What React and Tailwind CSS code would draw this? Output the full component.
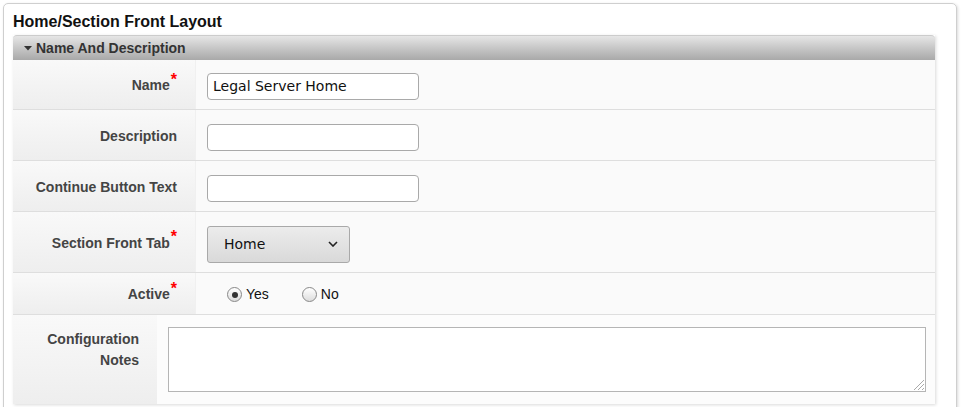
import React from "react";

const Star = () => (
  <span className="text-[#f00] text-[16px] font-bold leading-none relative -top-[6px] ml-[1px]">*</span>
);

function Row({ label, req, h, children, last }) {
  return (
    <div className={`flex ${last ? "" : "border-b border-[#dedede]"}`} style={{ height: h }}>
      <div className="w-[183px] shrink-0 flex items-center justify-end pr-[18px] pt-[2px] bg-gradient-to-b from-[#f9f9f9] to-[#eeeeee] border-r border-[#f0f0f0]">
        <span className="text-[14px] font-bold text-[#444]">{label}</span>
        {req && <Star />}
      </div>
      <div className="flex-1 flex items-center pl-[11px] bg-[#fafafa]">{children}</div>
    </div>
  );
}

const Input = ({ value }) => (
  <div className="w-[212px] h-[27px] mt-[4px] bg-white border border-[#a9a9a9] rounded-[4px] flex items-center pl-[5px] text-[14px] text-[#111]" style={{ fontFamily: '"DejaVu Sans", sans-serif' }}>
    {value}
  </div>
);

const Radio = ({ checked, label }) => (
  <div className="flex items-center">
    <div className="w-[15px] h-[15px] rounded-full border border-[#888] bg-gradient-to-b from-[#fff] to-[#ddd] flex items-center justify-center">
      {checked && <div className="w-[6px] h-[6px] rounded-full bg-[#333]" />}
    </div>
    <span className="ml-[4px] text-[14px] text-[#111]">{label}</span>
  </div>
);

export default function App() {
  return (
    <div className="w-[964px] h-[407px] bg-white overflow-hidden" style={{ fontFamily: '"Liberation Sans", Arial, sans-serif' }}>
      <div className="ml-[3px] mt-[3px] w-[954px] h-[420px] border border-[#cfcfcf] rounded-[5px] shadow-[1px_1px_3px_rgba(0,0,0,0.15)] pl-[9px]">
        <div className="pt-[9px] h-[31px] text-[16px] font-bold text-[#111] leading-[18px]">Home/Section Front Layout</div>
        <div className="w-[922px] shadow-[1px_1px_3px_rgba(0,0,0,0.15)]">
          <div className="h-[25px] rounded-t-[4px] border-t border-[#cccccc] bg-gradient-to-b from-[#e6e6e6] to-[#a9a9a9] flex items-center pl-[11px]">
            <svg width="8" height="5" viewBox="0 0 8 5" className="mr-[4px]">
              <polygon points="0,0 8,0 4,4.5" fill="#333" />
            </svg>
            <span className="text-[14px] font-bold text-[#333]">Name And Description</span>
          </div>
          <Row label="Name" req h={50}>
            <Input value="Legal Server Home" />
          </Row>
          <Row label="Description" h={51}>
            <Input value="" />
          </Row>
          <Row label="Continue Button Text" h={51}>
            <Input value="" />
          </Row>
          <Row label="Section Front Tab" req h={61}>
            <div className="w-[143px] h-[37px] mt-[4px] border border-[#a9a9a9] rounded-[3px] bg-gradient-to-b from-[#ececec] to-[#d9d9d9] flex items-center justify-between pl-[16px] pr-[11px] text-[14px] text-[#111]" style={{ fontFamily: '"DejaVu Sans", sans-serif' }}>
              <span>Home</span>
              <svg width="10" height="6" viewBox="0 0 10 6">
                <polyline points="1,1 5,5 9,1" fill="none" stroke="#222" strokeWidth="1.6" />
              </svg>
            </div>
          </Row>
          <Row label="Active" req h={42}>
            <div className="flex items-center gap-[33px] pl-[20px] mt-[2px]">
              <Radio checked label="Yes" />
              <Radio label="No" />
            </div>
          </Row>
          <div className="flex h-[89px]">
            <div className="w-[144px] shrink-0 bg-gradient-to-b from-[#f9f9f9] to-[#eeeeee] text-right pr-[18px] pt-[14px] text-[14px] font-bold text-[#444] leading-[21px]">
              Configuration<br />Notes
            </div>
            <div className="flex-1 bg-[#fcfcfc] pl-[11px] pt-[12px]">
              <div className="relative w-[758px] h-[65px] bg-white border border-[#b5b5b5]">
                <svg width="12" height="12" viewBox="0 0 12 12" className="absolute right-0 bottom-0">
                  <line x1="11" y1="1" x2="1" y2="11" stroke="#aaa" strokeWidth="1" />
                  <line x1="11" y1="5" x2="5" y2="11" stroke="#aaa" strokeWidth="1" />
                  <line x1="11" y1="9" x2="9" y2="11" stroke="#aaa" strokeWidth="1" />
                </svg>
              </div>
            </div>
          </div>
        </div>
      </div>
    </div>
  );
}
